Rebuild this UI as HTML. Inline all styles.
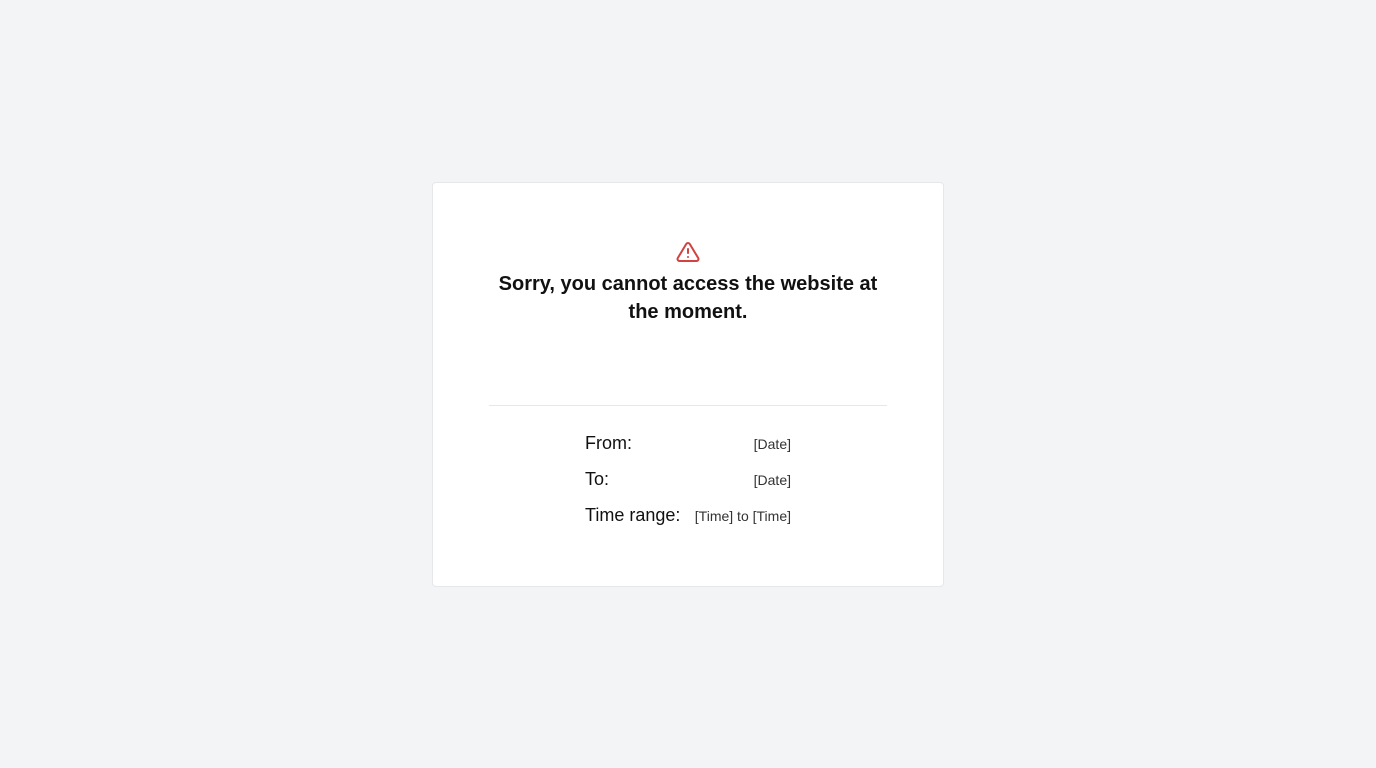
<!DOCTYPE html>
<html><head><meta charset="utf-8"><style>
html,body{margin:0;padding:0;background:#f3f4f6;width:1376px;height:768px;overflow:hidden;font-family:"Liberation Sans",sans-serif;color:#111}
.card{position:absolute;left:432px;top:182px;width:510px;height:403px;background:#fff;border:1px solid #e5e7eb;border-radius:4px;box-sizing:content-box}
.icon{position:absolute;left:243px;top:57px}
h1{position:absolute;left:0;right:0;top:87px;margin:0;text-align:center;font-size:20px;line-height:28px;font-weight:bold;padding:0 56px}
.hr{position:absolute;left:56px;right:56px;top:222px;height:1px;background:#e5e7eb}
.row{position:absolute;left:152px;width:206px;display:flex;justify-content:space-between;align-items:baseline}
.row b{font-weight:normal;font-size:18px}
.row span{font-size:14px;color:#333}
</style></head><body>
<div class="card">
<svg class="icon" width="24" height="24" viewBox="0 0 24 24" fill="none" stroke="#d14343" stroke-width="2" stroke-linecap="round" stroke-linejoin="round"><path d="M10.3 3.9L1.8 18a2 2 0 0 0 1.7 3h17a2 2 0 0 0 1.7-3L13.7 3.9a2 2 0 0 0-3.4 0z"/><path d="M12 9v4"/><path d="M12 17h.01"/></svg>
<h1>Sorry, you cannot access the website at the moment.</h1>
<div class="hr"></div>
<div class="row" style="top:250px"><b>From:</b><span>[Date]</span></div>
<div class="row" style="top:286px"><b>To:</b><span>[Date]</span></div>
<div class="row" style="top:322px"><b>Time range:</b><span>[Time] to [Time]</span></div>
</div>
</body></html>
